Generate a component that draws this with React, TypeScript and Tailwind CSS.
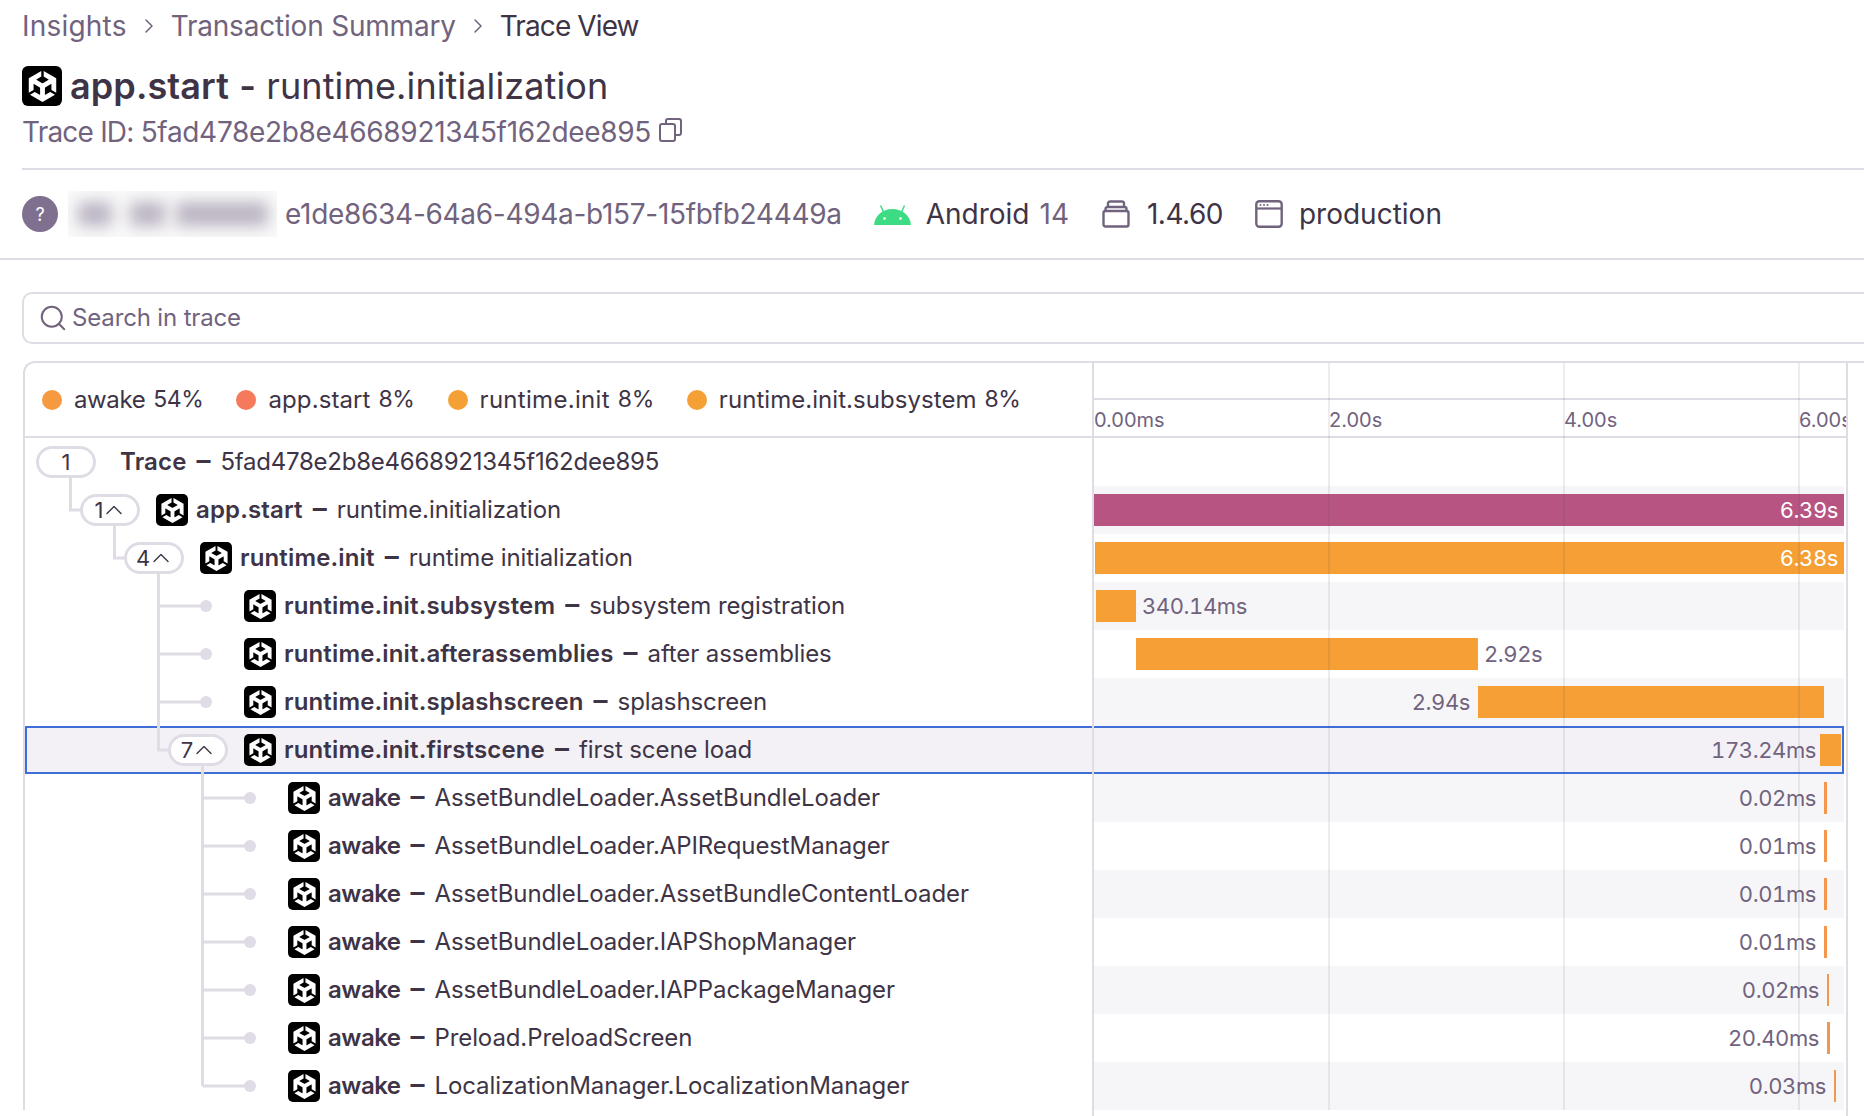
import React from "react";
import { ChevronRight, ChevronUp, Search } from "lucide-react";
import { SiUnity } from "react-icons/si";

type Row = {
  pad: string;
  count?: string;
  open?: boolean;
  icon?: boolean;
  op: string;
  desc: string;
  start?: number;
  width?: number;
  color?: string;
  duration?: string;
  place?: "inside" | "after" | "before";
  selected?: boolean;
};

const ORANGE = "#f59f35";
const TICK = "#f5964d";

const rows: Row[] = [
  { pad: "pl-[11px]", count: "1", op: "Trace", desc: "5fad478e2b8e4668921345f162dee895" },
  { pad: "pl-[55px]", count: "1", open: true, icon: true, op: "app.start", desc: "runtime.initialization", start: 0, width: 750, color: "#b85482", duration: "6.39s", place: "inside" },
  { pad: "pl-[99px]", count: "4", open: true, icon: true, op: "runtime.init", desc: "runtime initialization", start: 1, width: 749, color: ORANGE, duration: "6.38s", place: "inside" },
  { pad: "pl-[219px]", icon: true, op: "runtime.init.subsystem", desc: "subsystem registration", start: 2, width: 40, color: ORANGE, duration: "340.14ms", place: "after" },
  { pad: "pl-[219px]", icon: true, op: "runtime.init.afterassemblies", desc: "after assemblies", start: 42, width: 342, color: ORANGE, duration: "2.92s", place: "after" },
  { pad: "pl-[219px]", icon: true, op: "runtime.init.splashscreen", desc: "splashscreen", start: 384, width: 346, color: ORANGE, duration: "2.94s", place: "before" },
  { pad: "pl-[143px]", count: "7", open: true, icon: true, op: "runtime.init.firstscene", desc: "first scene load", start: 726, width: 21, color: ORANGE, duration: "173.24ms", place: "before", selected: true },
  { pad: "pl-[263px]", icon: true, op: "awake", desc: "AssetBundleLoader.AssetBundleLoader", start: 730, width: 3, color: TICK, duration: "0.02ms", place: "before" },
  { pad: "pl-[263px]", icon: true, op: "awake", desc: "AssetBundleLoader.APIRequestManager", start: 730, width: 3, color: TICK, duration: "0.01ms", place: "before" },
  { pad: "pl-[263px]", icon: true, op: "awake", desc: "AssetBundleLoader.AssetBundleContentLoader", start: 730, width: 3, color: TICK, duration: "0.01ms", place: "before" },
  { pad: "pl-[263px]", icon: true, op: "awake", desc: "AssetBundleLoader.IAPShopManager", start: 730, width: 3, color: TICK, duration: "0.01ms", place: "before" },
  { pad: "pl-[263px]", icon: true, op: "awake", desc: "AssetBundleLoader.IAPPackageManager", start: 733, width: 2, color: TICK, duration: "0.02ms", place: "before" },
  { pad: "pl-[263px]", icon: true, op: "awake", desc: "Preload.PreloadScreen", start: 733, width: 3, color: TICK, duration: "20.40ms", place: "before" },
  { pad: "pl-[263px]", icon: true, op: "awake", desc: "LocalizationManager.LocalizationManager", start: 740, width: 2, color: TICK, duration: "0.03ms", place: "before" },
];

const legend = [
  { color: "bg-[#f59a3f]", track: "tracking-[-0.4px]", name: "awake", pct: "54%" },
  { color: "bg-[#f5795b]", track: "tracking-[0.1px]", name: "app.start", pct: "8%" },
  { color: "bg-[#f5a035]", track: "tracking-[0.3px]", name: "runtime.init", pct: "8%" },
  { color: "bg-[#f5a035]", track: "tracking-[0.05px]", name: "runtime.init.subsystem", pct: "8%" },
];

const UnityIcon = ({ large }: { large?: boolean }) => (
  <div className={`flex shrink-0 items-center justify-center bg-black text-white ${large ? "h-10 w-10 rounded-[6px]" : "h-8 w-8 rounded-[5px]"}`}>
    <SiUnity size={large ? 31 : 25} />
  </div>
);

const AndroidIcon = () => (
  <svg width="37" height="21" viewBox="0 0 37 21">
    <path d="M0 21C0.8 11.5 8.5 5 18.5 5S36.2 11.5 37 21Z" fill="#3ddc84" />
    <path d="M9.5 8 6.5 1.5M27.5 8 30.5 1.5" stroke="#3ddc84" strokeWidth="1.5" fill="none" />
    <circle cx="10.5" cy="14.5" r="1.3" fill="#fff" />
    <circle cx="26.5" cy="14.5" r="1.3" fill="#fff" />
  </svg>
);

const ReleaseIcon = () => (
  <svg width="28" height="28" viewBox="0 0 28 28" fill="none" stroke="#71637e" strokeWidth="2.4" strokeLinejoin="round">
    <path d="M6 6.5V3a1.8 1.8 0 0 1 1.8-1.5h12.4A1.8 1.8 0 0 1 22 3v3.5" />
    <path d="M3.5 11V9a2 2 0 0 1 2-2h17a2 2 0 0 1 2 2v2" />
    <rect x="1.5" y="11" width="25" height="15.5" rx="2" />
  </svg>
);

const EnvIcon = () => (
  <svg width="28" height="28" viewBox="0 0 28 28" fill="none">
    <rect x="1.3" y="1.3" width="25.4" height="25.4" rx="3" stroke="#71637e" strokeWidth="2.4" />
    <path d="M1.5 8.5h25" stroke="#71637e" strokeWidth="2.2" />
    <circle cx="5.5" cy="5" r="1" fill="#71637e" />
    <circle cx="9" cy="5" r="1" fill="#71637e" />
    <circle cx="12.5" cy="5" r="1" fill="#71637e" />
  </svg>
);

const CopyIcon = () => (
  <svg width="23" height="24" viewBox="0 0 23 24" fill="none" stroke="#71637e" strokeWidth="2">
    <path d="M7 6V3a2 2 0 0 1 2-2h11a2 2 0 0 1 2 2v12a2 2 0 0 1-2 2h-4" />
    <rect x="1" y="6" width="15" height="17" rx="2" />
  </svg>
);

// tree connectors, coordinates are relative to the rows block
const TreeLines = () => (
  <svg className="pointer-events-none absolute left-0 top-0" width="1067" height="672" fill="none" stroke="#e0dce5" strokeWidth="3">
    <path d="M45.5 39V72H55" />
    <path d="M89.5 88V120H99" />
    <path d="M133.5 136V312H143" />
    <path d="M177.5 328V648" />
    {[168, 216, 264].map((y) => (
      <g key={y}>
        <path d={`M133.5 ${y}H176`} />
        <circle cx="181" cy={y} r="6" fill="#e0dce5" stroke="none" />
      </g>
    ))}
    {[360, 408, 456, 504, 552, 600, 648].map((y) => (
      <g key={y}>
        <path d={`M177.5 ${y}H220`} />
        <circle cx="225" cy={y} r="6" fill="#e0dce5" stroke="none" />
      </g>
    ))}
  </svg>
);

const SpanBar = ({ row }: { row: Row }) => {
  if (row.start === undefined) return null;
  const bar = (
    <div className={`flex h-8 shrink-0 items-center justify-end text-white ${row.place === "inside" ? "pr-[6px]" : ""}`} style={{ width: row.width, backgroundColor: row.color }}>
      {row.place === "inside" ? row.duration : ""}
    </div>
  );
  if (row.place === "before") {
    return (
      <>
        <div className={`flex shrink-0 justify-end ${row.selected ? "pr-1" : "pr-2"}`} style={{ width: row.start }}>{row.duration}</div>
        {bar}
      </>
    );
  }
  return (
    <>
      <div className="shrink-0" style={{ width: row.start }} />
      {bar}
      {row.place === "after" && <div className="pl-[6px]">{row.duration}</div>}
    </>
  );
};

export default function App() {
  return (
    <div className="h-[1116px] w-[1864px] overflow-hidden bg-white font-['Inter',sans-serif] text-[#3e3446]">
      <nav className="flex h-[52px] items-center gap-[10px] pl-[22px] text-[28px] text-[#71637e]">
        <span className="tracking-[0.2px]">Insights</span>
        <ChevronRight size={24} strokeWidth={1.5} />
        <span className="tracking-[-0.2px]">Transaction Summary</span>
        <ChevronRight size={24} strokeWidth={1.5} />
        <span className="tracking-[-0.9px] text-[#3e3446]">Trace View</span>
      </nav>

      <div className="mt-[14px] flex h-10 items-center gap-2 pl-[22px] text-[36px] tracking-[0.1px]">
        <UnityIcon large />
        <span><b className="font-semibold">app.start</b> <span className="font-semibold">-</span> runtime.initialization</span>
      </div>

      <div className="mt-3 flex h-7 items-center gap-2 pl-[22px] text-[28px] text-[#71637e]">
        <span>
          <span className="tracking-[-0.8px]">Trace ID: </span>
          <span className="tracking-[-0.33px]">5fad478e2b8e4668921345f162dee895</span>
        </span>
        <div className="mb-1"><CopyIcon /></div>
      </div>

      <div className="ml-[22px] mt-[22px] h-[2px] bg-[#e0dce5]" />

      <div className="flex h-[90px] items-center border-b-2 border-[#e0dce5] pl-[22px] text-[28px]">
        <div className="flex h-9 w-9 items-center justify-center rounded-full bg-[#80708f] text-[18px] text-white">?</div>
        <div className="ml-[10px] flex h-[46px] w-[209px] items-center overflow-hidden bg-[#fafafa] pl-[10px]">
          <div className="h-6 w-[34px] shrink-0 bg-[#b9b2c1] blur-[8px]" />
          <div className="ml-[18px] h-6 w-[35px] shrink-0 bg-[#b9b2c1] blur-[8px]" />
          <div className="ml-[11px] h-6 w-[92px] shrink-0 bg-[#b9b2c1] blur-[8px]" />
        </div>
        <span className="ml-2 tracking-[-0.3px] text-[#71637e]">e1de8634-64a6-494a-b157-15fbfb24449a</span>
        <div className="ml-8"><AndroidIcon /></div>
        <span className="ml-[15px]">Android</span>
        <span className="ml-[10px] text-[#71637e]">14</span>
        <div className="ml-[33px]"><ReleaseIcon /></div>
        <span className="ml-[17px] tracking-[-0.5px]">1.4.60</span>
        <div className="ml-[32px]"><EnvIcon /></div>
        <span className="ml-4">production</span>
      </div>

      <div className="ml-[22px] mt-8 flex h-[52px] w-[1900px] items-center gap-1 rounded-[10px] border-2 border-[#e0dce5] pl-[14px] text-[24px] tracking-[-0.15px] text-[#71637e]">
        <Search size={30} strokeWidth={1.6} />
        <span>Search in trace</span>
      </div>

      <div className="relative ml-[23px] mt-[17px] w-[1900px] rounded-tl-[12px] border-l-2 border-t-2 border-[#e0dce5]">
        <div className="flex h-[75px] w-[1823px] border-b-2 border-[#e0dce5]">
          <div className="flex w-[1067px] items-center pl-[17px] text-[24px]">
            {legend.map((item) => (
              <div key={item.name} className="mr-[33px] flex items-center">
                <span className={`h-5 w-5 rounded-full ${item.color}`} />
                <span className={`ml-3 ${item.track}`}>{item.name}</span>
                <span className="ml-2 text-[23px] tracking-[-0.4px]">{item.pct}</span>
              </div>
            ))}
          </div>
          <div className="flex w-[756px] flex-col border-x-2 border-[#e0dce5]">
            <div className="h-[37px] border-b-2 border-[#e0dce5]" />
            <div className="flex flex-1 items-center overflow-hidden pt-1 text-[20px] text-[#71637e]">
              <div className="w-[235px] shrink-0">0.00ms</div>
              <div className="w-[235px] shrink-0">2.00s</div>
              <div className="w-[235px] shrink-0">4.00s</div>
              <div className="w-[235px] shrink-0">6.00s</div>
            </div>
          </div>
        </div>

        <div className="relative">
          {rows.map((row, i) => (
            <div key={row.desc} className={`relative flex h-12 w-[1819px] ${row.selected ? "bg-[#f3f1f6]" : ""}`}>
              <div className={`flex w-[1067px] items-center text-[24px] ${row.pad}`}>
                {row.count && (
                  <div className="flex h-8 w-[60px] shrink-0 items-center justify-center rounded-full border-[3px] border-[#e0dce5] bg-white text-[22px]">
                    {row.count}
                    {row.open && <ChevronUp size={28} strokeWidth={1.2} className="-mx-[3px]" />}
                  </div>
                )}
                {row.icon ? (
                  <div className={row.count ? "ml-4" : ""}><UnityIcon /></div>
                ) : (
                  <div className="ml-6" />
                )}
                <span className={`whitespace-nowrap ${row.icon ? "ml-2" : ""}`}>
                  <span className={`font-semibold ${row.op === "awake" ? "tracking-[-0.5px]" : "tracking-[0.15px]"}`}>{row.op}</span>
                  <span className="px-[10px] text-[28px] font-semibold leading-none">–</span>
                  <span className={i === 0 ? "tracking-[-0.25px]" : "tracking-[-0.1px]"}>{row.desc}</span>
                </span>
              </div>
              <div className={`flex w-[752px] items-center border-l-2 text-[22px] tracking-[-0.4px] tabular-nums text-[#71637e] ${row.selected ? "border-[#3e6fd9]" : "border-[#e0dce5]"} ${i % 2 === 1 && !row.selected ? "bg-[#f6f6f9]" : ""}`}>
                <SpanBar row={row} />
              </div>
              {row.selected && <div className="pointer-events-none absolute inset-0 border-2 border-[#3e6fd9]" />}
            </div>
          ))}
          <TreeLines />
          <div className="absolute -bottom-10 left-[1067px] top-0 w-[756px] border-x-2 border-[#e0dce5]" />
        </div>

        {/* time grid lines run over the bars */}
        <div className="pointer-events-none absolute bottom-0 left-[1069px] top-0 flex">
          <div className="w-[236px] border-r-2 border-[#50406e1a]" />
          <div className="w-[235px] border-r-2 border-[#50406e1a]" />
          <div className="w-[235px] border-r-2 border-[#50406e1a]" />
        </div>
      </div>
    </div>
  );
}
